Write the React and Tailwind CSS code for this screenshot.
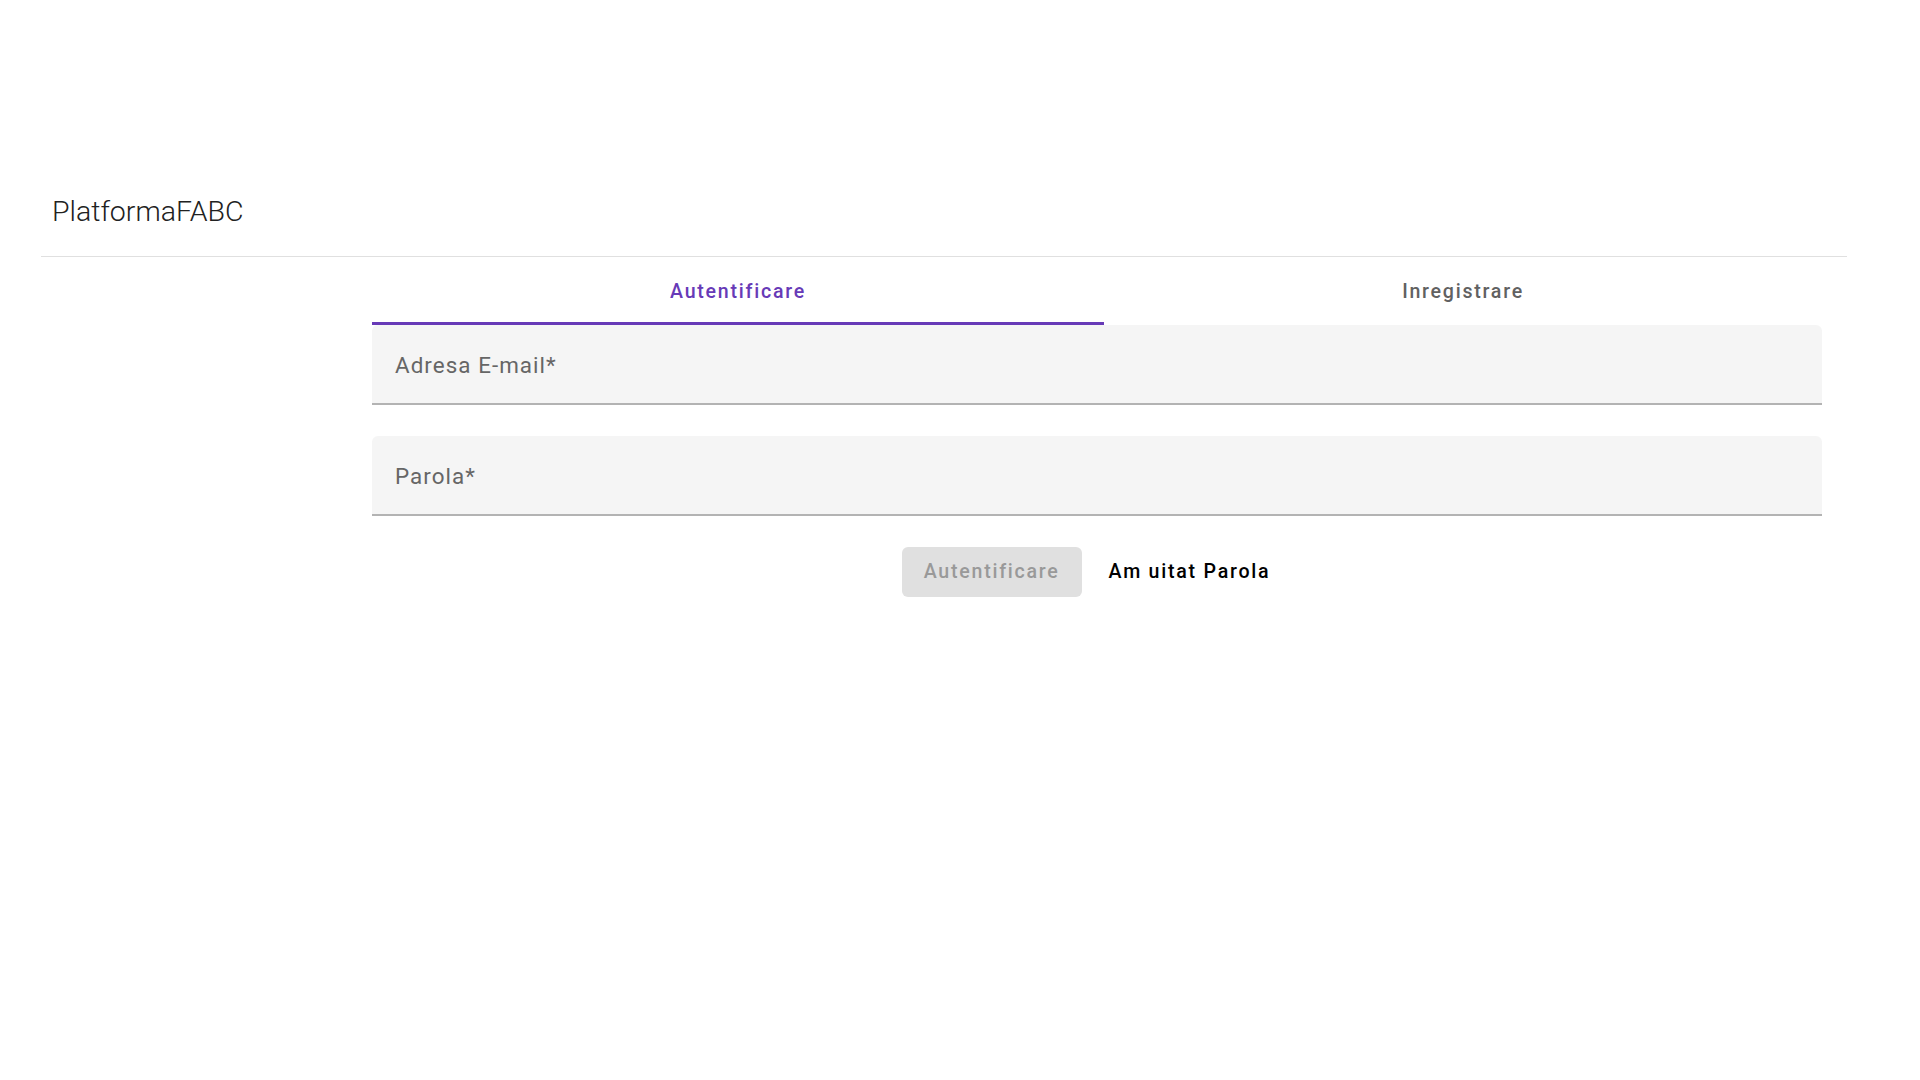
import { useState } from 'react'

function Field({ label, type }) {
  const [value, setValue] = useState('')
  return (
    <label className="relative flex h-[80px] items-center rounded-t-[6px] border-b-2 border-[#b3b3b3] bg-[#f5f5f5] px-[23px] pt-[3px]">
      {!value ? (
        <span className="pointer-events-none absolute left-[23px] text-[22.4px] tracking-[1.05px] text-[#666666]">{label}</span>
      ) : null}
      <input
        type={type}
        value={value}
        onChange={(event) => setValue(event.target.value)}
        className="w-full bg-transparent text-[22.4px] text-[#212121] outline-none"
      />
    </label>
  )
}

function App() {
  const [tab, setTab] = useState('login')

  const tabClass = (active) =>
    active
      ? 'flex h-[68px] flex-auto items-center justify-center border-b-[3px] border-[#673ab7] px-[34px] pt-[5px] text-[19.6px] font-medium tracking-[1.75px] text-[#673ab7]'
      : 'flex h-[68px] flex-auto items-center justify-center border-b-[3px] border-transparent px-[34px] pt-[5px] text-[19.6px] font-medium tracking-[1.75px] text-[#616161]'

  return (
    <main className="min-h-screen bg-white font-['Roboto',sans-serif]">
      <div className="w-[1847px] pl-[41px] pt-[194px]">
        <h1 className="pl-[11px] text-[28.5px] font-light leading-[36px] text-[#212121]">PlatformaFABC</h1>
        <div className="mt-[26px] h-px bg-[#e0e0e0]" />

        <div className="ml-[331px] w-[1450px]">
          <div className="flex">
            <button type="button" onClick={() => setTab('login')} className={tabClass(tab === 'login')}>
              Autentificare
            </button>
            <button type="button" onClick={() => setTab('register')} className={tabClass(tab === 'register')}>
              Inregistrare
            </button>
          </div>

          <form onSubmit={(event) => event.preventDefault()}>
            <Field label="Adresa E-mail*" type="email" />
            <div className="mt-[31px]">
              <Field label="Parola*" type="password" />
            </div>

            <div className="mt-[31px] flex justify-center gap-[5px]">
              <button
                type="submit"
                disabled
                className="h-[50px] rounded-[6px] bg-[#e0e0e0] px-[22px] text-[19.6px] font-medium tracking-[1.75px] text-[#999999]"
              >
                Autentificare
              </button>
              <button
                type="button"
                className="h-[50px] rounded-[6px] px-[22px] text-[19.6px] font-medium tracking-[1.75px] text-black"
              >
                Am uitat Parola
              </button>
            </div>
          </form>
        </div>
      </div>
    </main>
  )
}

export default App
